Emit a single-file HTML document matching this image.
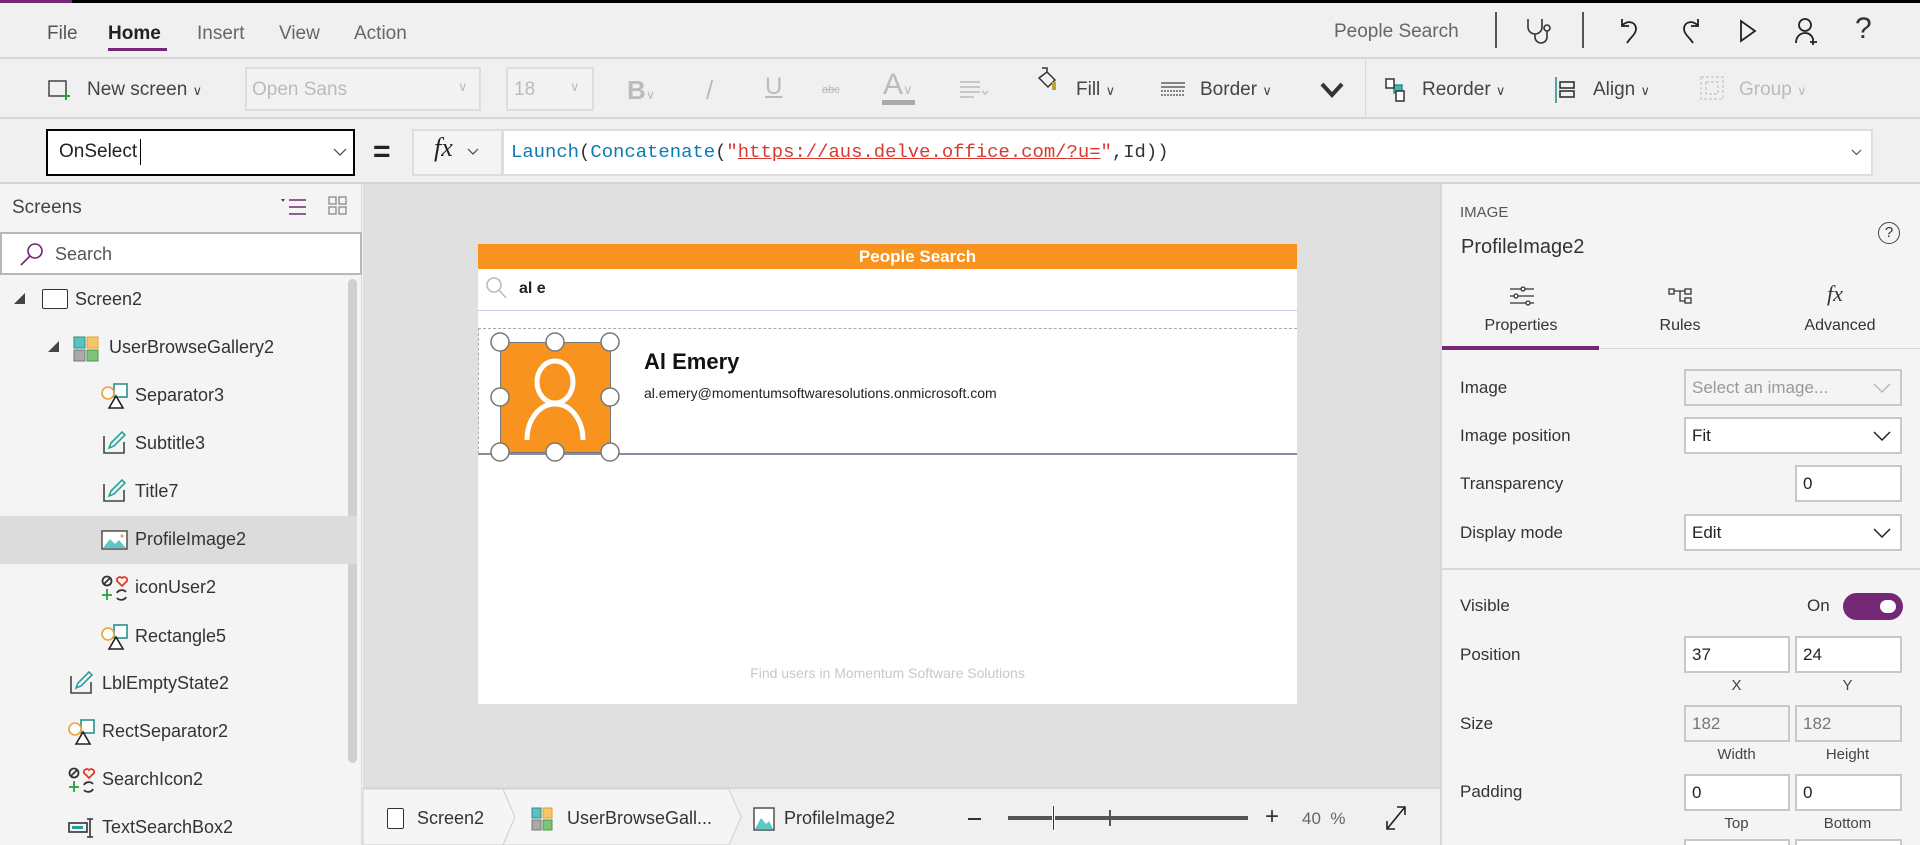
<!DOCTYPE html>
<html style="width:1920px;height:845px;overflow:hidden"><head><meta charset="utf-8"><style>
*{box-sizing:border-box;margin:0;padding:0}
body{width:1920px;height:845px;overflow:hidden;background:#f0f0f0;font-family:"Liberation Sans",sans-serif;color:#333;position:relative}
.a{position:absolute;white-space:nowrap}
.t{font-size:19px;color:#444}
.tb{font-size:19px;color:#444}
.dis{color:#bbb}
.tree{font-size:18px;color:#333}
.lbl{font-size:17px;color:#333;left:1460px}
.box{position:absolute;background:#fff;border:2px solid #c8c8c8;font-size:17px;padding-left:6px;line-height:33px;color:#222}
.sub{font-size:15px;color:#444;text-align:center;width:105px}
svg{position:absolute;overflow:visible}
</style></head><body>
<div class="a" style="left:0;top:0;width:1920px;height:3px;background:#000"></div>
<div class="a" style="left:0;top:0;width:72px;height:3px;background:#742774"></div>
<div class="a t" style="left:47px;top:23px;color:#555">File</div>
<div class="a t" style="left:108px;top:23px;color:#222;font-weight:bold">Home</div>
<div class="a" style="left:108px;top:48px;width:59px;height:3px;background:#742774"></div>
<div class="a t" style="left:197px;top:23px;color:#666">Insert</div>
<div class="a t" style="left:279px;top:23px;color:#666">View</div>
<div class="a t" style="left:354px;top:23px;color:#666">Action</div>
<div class="a t" style="left:1334px;top:21px;color:#666">People Search</div>
<div class="a" style="left:1495px;top:12px;width:2px;height:36px;background:#555"></div>
<div class="a" style="left:1582px;top:12px;width:2px;height:36px;background:#555"></div>
<svg style="left:1525px;top:17px" width="30" height="28" viewBox="0 0 30 28" fill="none" stroke="#333" stroke-width="1.6"><path d="M3 2v8a7 7 0 0 0 14 0V2M10 17v3a6 6 0 0 0 12 0v-6"/><circle cx="22" cy="11" r="3"/></svg>
<svg style="left:1618px;top:17px" width="22" height="28" viewBox="0 0 22 28" fill="none" stroke="#222" stroke-width="1.8"><path d="M4 2v7h7M4 9c4-6 14-5 14 3 0 5-6 9-9 14"/></svg>
<svg style="left:1680px;top:17px" width="22" height="28" viewBox="0 0 22 28" fill="none" stroke="#222" stroke-width="1.8"><path d="M18 2v7h-7M18 9c-4-6-14-5-14 3 0 5 6 9 9 14"/></svg>
<svg style="left:1739px;top:19px" width="18" height="24" viewBox="0 0 18 24" fill="none" stroke="#222" stroke-width="1.8"><path d="M2 2v20l14-10z"/></svg>
<svg style="left:1794px;top:17px" width="26" height="28" viewBox="0 0 26 28" fill="none" stroke="#222" stroke-width="1.8"><circle cx="11" cy="8" r="6"/><path d="M2 26c0-6 4-10 9-10s7 3 8 6M19 21v7M16 25h7"/></svg>
<div class="a" style="left:1855px;top:12px;font-size:30px;color:#333">?</div>
<div class="a" style="left:0;top:57px;width:1920px;height:2px;background:#d6d6d6"></div>
<svg style="left:48px;top:80px" width="22" height="20" viewBox="0 0 22 20" fill="none"><rect x="1" y="1" width="17" height="15" stroke="#444" stroke-width="1.5"/><path d="M18 12v8M14 16h8" stroke="#2e9b3a" stroke-width="2"/></svg>
<div class="a tb" style="left:87px;top:79px">New screen <span style="font-size:13px">&#8744;</span></div>
<div class="a" style="left:245px;top:67px;width:236px;height:44px;border:2px solid #ddd;background:#f2f2f2"></div>
<div class="a tb dis" style="left:252px;top:79px">Open Sans</div>
<div class="a dis" style="left:458px;top:79px;font-size:13px">&#8744;</div>
<div class="a" style="left:506px;top:67px;width:88px;height:44px;border:2px solid #ddd;background:#f2f2f2"></div>
<div class="a tb dis" style="left:514px;top:79px">18</div>
<div class="a dis" style="left:570px;top:79px;font-size:13px">&#8744;</div>
<div class="a dis" style="left:627px;top:75px;font-size:26px;font-weight:bold">B<span style="font-size:13px;font-weight:normal">&#8744;</span></div>
<div class="a dis" style="left:706px;top:75px;font-size:26px">/</div>
<div class="a dis" style="left:765px;top:73px;font-size:24px;text-decoration:underline">U</div>
<div class="a dis" style="left:822px;top:84px;font-size:11px;text-decoration:line-through">abc</div>
<div class="a dis" style="left:883px;top:68px;font-size:30px">A<span style="font-size:13px">&#8744;</span></div>
<div class="a" style="left:882px;top:100px;width:33px;height:5px;background:#aaa"></div>
<svg style="left:960px;top:81px" width="30" height="18" viewBox="0 0 30 18" stroke="#bbb" stroke-width="1.4"><path d="M0 1h20M0 6h20M0 11h20M0 16h14"/><path d="M22 10l3 3 3-3" fill="none"/></svg>
<svg style="left:1036px;top:66px" width="24" height="30" viewBox="0 0 24 30" fill="none" stroke="#333" stroke-width="1.5"><path d="M6 2h5v5M3 12l8-6 8 8-7 7z"/><path d="M18 16v8" stroke="#b8a23b" stroke-width="4"/></svg>
<div class="a tb" style="left:1076px;top:79px">Fill <span style="font-size:13px">&#8744;</span></div>
<svg style="left:1161px;top:82px" width="24" height="14" viewBox="0 0 24 14" stroke="#444" stroke-width="1.2"><path d="M0 1h24M0 5h24" /><path d="M0 9h24M0 13h24" stroke-dasharray="2 1"/></svg>
<div class="a tb" style="left:1200px;top:79px">Border <span style="font-size:13px">&#8744;</span></div>
<svg style="left:1320px;top:82px" width="24" height="16" viewBox="0 0 24 16" fill="none" stroke="#333" stroke-width="4"><path d="M2 2l10 11 10-11"/></svg>
<div class="a" style="left:1365px;top:59px;width:1px;height:59px;background:#d8d8d8"></div>
<svg style="left:1384px;top:77px" width="22" height="26" viewBox="0 0 22 26" fill="none" stroke-width="1.5"><rect x="10" y="8" width="8" height="8" fill="#43b6b0" stroke="#2a8f8a"/><rect x="2" y="2" width="8" height="9" stroke="#333" fill="#fff"/><rect x="12" y="14" width="8" height="10" stroke="#333" fill="#fff"/></svg>
<div class="a tb" style="left:1422px;top:79px">Reorder <span style="font-size:13px">&#8744;</span></div>
<svg style="left:1554px;top:77px" width="24" height="26" viewBox="0 0 24 26" fill="none" stroke-width="1.6"><path d="M2 0v26" stroke="#2a8f8a"/><rect x="6" y="5" width="14" height="6" stroke="#333"/><rect x="6" y="14" width="14" height="6" stroke="#333"/></svg>
<div class="a tb" style="left:1593px;top:79px">Align <span style="font-size:13px">&#8744;</span></div>
<svg style="left:1700px;top:76px" width="26" height="26" viewBox="0 0 26 26" fill="none" stroke="#ccc" stroke-width="1.4" stroke-dasharray="3 2"><rect x="1" y="1" width="22" height="22"/><rect x="6" y="6" width="12" height="12"/></svg>
<div class="a tb dis" style="left:1739px;top:79px">Group <span style="font-size:13px">&#8744;</span></div>
<div class="a" style="left:0;top:117px;width:1920px;height:2px;background:#d6d6d6"></div>
<div class="a" style="left:46px;top:129px;width:309px;height:47px;border:2px solid #000;background:#fff"></div>
<div class="a" style="left:59px;top:141px;font-size:19px;color:#222">OnSelect</div>
<div class="a" style="left:140px;top:139px;width:1px;height:26px;background:#000"></div>
<svg style="left:333px;top:148px" width="14" height="8" viewBox="0 0 14 8" fill="none" stroke="#444" stroke-width="1.2"><path d="M1 1l6 6 6-6"/></svg>
<div class="a" style="left:373px;top:135px;font-size:30px;font-weight:bold;color:#222">=</div>
<div class="a" style="left:412px;top:129px;width:91px;height:47px;border:2px solid #ddd;background:#f4f4f4"></div>
<div class="a" style="left:434px;top:133px;font-family:'Liberation Serif',serif;font-style:italic;font-size:26px;color:#222">fx</div>
<svg style="left:467px;top:148px" width="12" height="7" viewBox="0 0 12 7" fill="none" stroke="#444" stroke-width="1.2"><path d="M1 1l5 5 5-5"/></svg>
<div class="a" style="left:502px;top:129px;width:1371px;height:47px;border:2px solid #ddd;background:#fff"></div>
<div class="a" style="left:511px;top:141px;font-family:'Liberation Mono',monospace;font-size:18.9px;color:#333"><span style="color:#0b7ab5">Launch</span>(<span style="color:#0b7ab5">Concatenate</span>(<span style="color:#d9382e">"<u>https://aus.delve.office.com/?u=</u>"</span>,Id))</div>
<svg style="left:1851px;top:149px" width="11" height="6" viewBox="0 0 11 6" fill="none" stroke="#444" stroke-width="1"><path d="M1 1l4.5 4.5L10 1"/></svg>
<div class="a" style="left:0;top:182px;width:1920px;height:2px;background:#d6d6d6"></div>
<div class="a" style="left:0;top:184px;width:362px;height:661px;background:#f4f4f4;border-right:1px solid #ddd"></div>
<div class="a" style="left:12px;top:197px;font-size:19px;color:#444">Screens</div>
<svg style="left:281px;top:197px" width="26" height="20" viewBox="0 0 26 20" stroke="#742774" stroke-width="1.6"><path d="M8 3h17M8 10h17M8 17h17"/><path d="M0 2h4l-2 3z" fill="#742774" stroke="none"/></svg>
<svg style="left:328px;top:196px" width="20" height="20" viewBox="0 0 20 20" fill="none" stroke="#888" stroke-width="1.3"><rect x="1" y="1" width="7" height="7"/><rect x="11" y="1" width="7" height="7"/><rect x="1" y="11" width="7" height="7"/><rect x="11" y="11" width="7" height="7"/></svg>
<div class="a" style="left:0;top:232px;width:362px;height:43px;border:2px solid #b8b8b8;background:#fff"></div>
<svg style="left:19px;top:242px" width="26" height="26" viewBox="0 0 26 26" fill="none" stroke="#742774" stroke-width="1.6"><circle cx="16" cy="9" r="7"/><path d="M11 14L2 23"/></svg>
<div class="a" style="left:55px;top:244px;font-size:18px;color:#555">Search</div>
<div class="a" style="left:348px;top:279px;width:9px;height:484px;background:#d0d0d0;border-radius:5px"></div>
<div class="a" style="left:0;top:516px;width:357px;height:48px;background:#dcdcdc"></div>
<div class="a" style="left:14px;top:293px;width:0;height:0;border-left:11px solid transparent;border-bottom:11px solid #444"></div>
<div class="a" style="left:42px;top:289px;width:26px;height:20px;border:1.5px solid #333;border-radius:2px;background:#fff"></div>
<div class="a tree" style="left:75px;top:289px">Screen2</div>
<div class="a" style="left:48px;top:341px;width:0;height:0;border-left:11px solid transparent;border-bottom:11px solid #444"></div>
<svg style="left:73px;top:336px" width="26" height="26" viewBox="0 0 26 26"><rect x="1" y="1" width="11" height="11" fill="#5bc2c2" stroke="#2a8f8a"/><rect x="14" y="1" width="11" height="11" fill="#f7c56a" stroke="#e0a030"/><rect x="1" y="14" width="11" height="11" fill="#aaa" stroke="#777"/><rect x="14" y="14" width="11" height="11" fill="#7cc47c" stroke="#4a9a4a"/></svg>
<div class="a tree" style="left:109px;top:337px">UserBrowseGallery2</div>
<svg style="left:101px;top:383px" width="27" height="26" viewBox="0 0 27 26" fill="none" stroke-width="1.6"><rect x="13" y="1" width="13" height="13" stroke="#2a8f8a" fill="#fff"/><circle cx="7" cy="10" r="6" stroke="#e8a33a" fill="#fff"/><path d="M8 25l7-12 7 12z" stroke="#222" fill="#fff"/></svg>
<div class="a tree" style="left:135px;top:385px">Separator3</div>
<svg style="left:103px;top:430px" width="24" height="24" viewBox="0 0 24 24" fill="none" stroke-width="1.6"><path d="M1 6v17h20V12" stroke="#444"/><path d="M6 18l2-5L19 2l3 3-11 11z" stroke="#2a9f9a"/></svg>
<div class="a tree" style="left:135px;top:433px">Subtitle3</div>
<svg style="left:103px;top:478px" width="24" height="24" viewBox="0 0 24 24" fill="none" stroke-width="1.6"><path d="M1 6v17h20V12" stroke="#444"/><path d="M6 18l2-5L19 2l3 3-11 11z" stroke="#2a9f9a"/></svg>
<div class="a tree" style="left:135px;top:481px">Title7</div>
<svg style="left:101px;top:530px" width="27" height="20" viewBox="0 0 27 20" stroke-width="1.4"><rect x="1" y="1" width="25" height="18" fill="#fff" stroke="#444"/><path d="M2 18l7-9 5 5 4-4 7 8z" fill="#5bc8c4"/><circle cx="21" cy="6" r="1.5" fill="#f0a030"/></svg>
<div class="a tree" style="left:135px;top:529px">ProfileImage2</div>
<svg style="left:101px;top:575px" width="27" height="26" viewBox="0 0 27 26" fill="none" stroke-width="1.8"><circle cx="6" cy="6" r="4.5" stroke="#333"/><path d="M3 9l6-6" stroke="#333"/><path d="M21 11l-5-5a3 3 0 0 1 5-3 3 3 0 0 1 5 3z" stroke="#e53a2a"/><path d="M6 14v11M1 20h10" stroke="#2e9b3a"/><path d="M16 18a5 4 0 0 1 9-1M25 22a5 4 0 0 1-9 1" stroke="#333"/></svg>
<div class="a tree" style="left:135px;top:577px">iconUser2</div>
<svg style="left:101px;top:624px" width="27" height="26" viewBox="0 0 27 26" fill="none" stroke-width="1.6"><rect x="13" y="1" width="13" height="13" stroke="#2a8f8a" fill="#fff"/><circle cx="7" cy="10" r="6" stroke="#e8a33a" fill="#fff"/><path d="M8 25l7-12 7 12z" stroke="#222" fill="#fff"/></svg>
<div class="a tree" style="left:135px;top:626px">Rectangle5</div>
<svg style="left:70px;top:670px" width="24" height="24" viewBox="0 0 24 24" fill="none" stroke-width="1.6"><path d="M1 6v17h20V12" stroke="#444"/><path d="M6 18l2-5L19 2l3 3-11 11z" stroke="#2a9f9a"/></svg>
<div class="a tree" style="left:102px;top:673px">LblEmptyState2</div>
<svg style="left:68px;top:719px" width="27" height="26" viewBox="0 0 27 26" fill="none" stroke-width="1.6"><rect x="13" y="1" width="13" height="13" stroke="#2a8f8a" fill="#fff"/><circle cx="7" cy="10" r="6" stroke="#e8a33a" fill="#fff"/><path d="M8 25l7-12 7 12z" stroke="#222" fill="#fff"/></svg>
<div class="a tree" style="left:102px;top:721px">RectSeparator2</div>
<svg style="left:68px;top:767px" width="27" height="26" viewBox="0 0 27 26" fill="none" stroke-width="1.8"><circle cx="6" cy="6" r="4.5" stroke="#333"/><path d="M3 9l6-6" stroke="#333"/><path d="M21 11l-5-5a3 3 0 0 1 5-3 3 3 0 0 1 5 3z" stroke="#e53a2a"/><path d="M6 14v11M1 20h10" stroke="#2e9b3a"/><path d="M16 18a5 4 0 0 1 9-1M25 22a5 4 0 0 1-9 1" stroke="#333"/></svg>
<div class="a tree" style="left:102px;top:769px">SearchIcon2</div>
<svg style="left:68px;top:817px" width="27" height="22" viewBox="0 0 27 22" fill="none" stroke-width="1.6"><rect x="1" y="6" width="18" height="9" stroke="#333"/><rect x="4" y="9" width="11" height="3" fill="#2a9f9a" stroke="none"/><path d="M22 2v18M19 2h6M19 20h6" stroke="#333"/></svg>
<div class="a tree" style="left:102px;top:817px">TextSearchBox2</div>
<div class="a" style="left:363px;top:184px;width:1078px;height:603px;background:#e0e0e0"></div>
<div class="a" style="left:478px;top:244px;width:819px;height:460px;background:#fff"></div>
<div class="a" style="left:478px;top:244px;width:819px;height:25px;background:#f7931e;color:#fff;font-weight:bold;font-size:17px;text-align:center;line-height:25px;padding-left:60px">People Search</div>
<svg style="left:485px;top:276px" width="22" height="24" viewBox="0 0 22 24" fill="none" stroke="#bbb" stroke-width="1.6"><circle cx="9" cy="9" r="7"/><path d="M14 14l7 8"/></svg>
<div class="a" style="left:519px;top:280px;font-size:16px;color:#222;font-weight:bold">al e</div>
<div class="a" style="left:478px;top:310px;width:819px;height:1px;background:#c8d0e0"></div>
<div class="a" style="left:478px;top:328px;width:819px;height:0;border-top:1px dashed #aaa"></div>
<div class="a" style="left:478px;top:453px;width:819px;height:2px;background:#8a8aa0"></div>
<div class="a" style="left:478px;top:328px;width:0;height:126px;border-left:1px dashed #aaa"></div>
<div class="a" style="left:500px;top:342px;width:111px;height:111px;background:#f7931e;border:1px solid #777"></div>
<svg style="left:500px;top:342px" width="111" height="111" viewBox="0 0 111 111" fill="none" stroke="#fff" stroke-width="5"><ellipse cx="55" cy="40" rx="18" ry="21"/><path d="M27 98c0-20 12-36 28-36s28 16 28 36"/></svg>
<svg style="left:488px;top:330px" width="135" height="135" viewBox="0 0 135 135" fill="#fff" stroke="#777" stroke-width="1.5"><circle cx="12" cy="12" r="9"/><circle cx="67" cy="12" r="9"/><circle cx="122" cy="12" r="9"/><circle cx="12" cy="67" r="9"/><circle cx="122" cy="67" r="9"/><circle cx="12" cy="122" r="9"/><circle cx="67" cy="122" r="9"/><circle cx="122" cy="122" r="9"/></svg>
<div class="a" style="left:644px;top:349px;font-size:22px;font-weight:bold;color:#111">Al Emery</div>
<div class="a" style="left:644px;top:385px;font-size:14px;color:#222">al.emery@momentumsoftwaresolutions.onmicrosoft.com</div>
<div class="a" style="left:478px;top:665px;width:819px;text-align:center;font-size:14px;color:#c8c8c8">Find users in Momentum Software Solutions</div>
<div class="a" style="left:363px;top:787px;width:1078px;height:58px;background:#f0f0f0;border-top:2px solid #d8d8d8"></div>
<svg style="left:363px;top:789px" width="400" height="56" viewBox="0 0 400 56" fill="#f5f5f5" stroke="#d0d0d0"><path d="M0 0h140l12 28-12 28H0z"/><path d="M140 0h226l12 28-12 28H140l12-28z"/></svg>
<div class="a" style="left:387px;top:808px;width:17px;height:21px;border:1.5px solid #333;border-radius:2px;background:#fff"></div>
<div class="a" style="left:417px;top:808px;font-size:18px;color:#333">Screen2</div>
<svg style="left:531px;top:807px" width="22" height="24" viewBox="0 0 22 24"><rect x="1" y="1" width="9" height="10" fill="#5bc2c2" stroke="#2a8f8a"/><rect x="12" y="1" width="9" height="10" fill="#f7c56a" stroke="#e0a030"/><rect x="1" y="13" width="9" height="10" fill="#aaa" stroke="#777"/><rect x="12" y="13" width="9" height="10" fill="#7cc47c" stroke="#4a9a4a"/></svg>
<div class="a" style="left:567px;top:808px;font-size:18px;color:#333">UserBrowseGall...</div>
<svg style="left:753px;top:807px" width="22" height="24" viewBox="0 0 22 24" stroke-width="1.4"><rect x="1" y="1" width="20" height="22" fill="#fff" stroke="#444"/><path d="M2 22l6-11 5 6 3-3 4 8z" fill="#5bc8c4"/></svg>
<div class="a" style="left:784px;top:808px;font-size:18px;color:#333">ProfileImage2</div>
<div class="a" style="left:968px;top:818px;width:13px;height:1.5px;background:#333"></div>
<div class="a" style="left:1008px;top:816px;width:240px;height:4px;background:#555"></div>
<div class="a" style="left:1052px;top:805px;width:3px;height:26px;background:#333;border:1px solid #fff"></div>
<div class="a" style="left:1109px;top:810px;width:2px;height:16px;background:#555"></div>
<div class="a" style="left:1265px;top:803px;font-size:24px;color:#333">+</div>
<div class="a" style="left:1302px;top:809px;font-size:17px;color:#666">40 &nbsp;%</div>
<svg style="left:1384px;top:804px" width="24" height="28" viewBox="0 0 24 28" fill="none" stroke="#222" stroke-width="1.6"><path d="M3 25L21 3M13 3h8v8M3 17v8h8"/></svg>
<div class="a" style="left:1440px;top:184px;width:480px;height:661px;background:#f4f4f4;border-left:2px solid #d8d8d8"></div>
<div class="a" style="left:1460px;top:204px;font-size:15px;color:#555">IMAGE</div>
<div class="a" style="left:1461px;top:236px;font-size:20px;color:#333">ProfileImage2</div>
<div class="a" style="left:1878px;top:222px;width:22px;height:22px;border:1.5px solid #444;border-radius:50%;font-size:15px;text-align:center;line-height:19px;color:#333">?</div>
<svg style="left:1510px;top:287px" width="24" height="18" viewBox="0 0 24 18" fill="none" stroke="#333" stroke-width="1.3"><path d="M0 2h24M0 9h24M0 16h24"/><circle cx="13" cy="2" r="2" fill="#f4f4f4"/><circle cx="6" cy="9" r="2" fill="#f4f4f4"/><circle cx="18" cy="16" r="2" fill="#f4f4f4"/></svg>
<div class="a" style="left:1441px;top:317px;width:160px;text-align:center;font-size:16px;color:#333">Properties</div>
<svg style="left:1668px;top:288px" width="24" height="16" viewBox="0 0 24 16" fill="none" stroke="#333" stroke-width="1.3"><rect x="1" y="1" width="5" height="5"/><rect x="17" y="1" width="6" height="5"/><rect x="17" y="10" width="6" height="5"/><path d="M6 3h11M12 3v10h5"/></svg>
<div class="a" style="left:1600px;top:317px;width:160px;text-align:center;font-size:16px;color:#333">Rules</div>
<div class="a" style="left:1827px;top:281px;font-family:'Liberation Serif',serif;font-style:italic;font-size:22px;color:#333">fx</div>
<div class="a" style="left:1760px;top:317px;width:160px;text-align:center;font-size:16px;color:#333">Advanced</div>
<div class="a" style="left:1442px;top:348px;width:478px;height:1px;background:#d8d8d8"></div>
<div class="a" style="left:1442px;top:346px;width:157px;height:4px;background:#742774"></div>
<div class="a lbl" style="top:378px">Image</div>
<div class="box" style="left:1684px;top:369px;width:218px;height:37px;background:#f4f4f4;color:#999">Select an image...</div>
<svg style="left:1873px;top:383px" width="18" height="10" viewBox="0 0 18 10" fill="none" stroke="#bbb" stroke-width="1.5"><path d="M1 1l8 8 8-8"/></svg>
<div class="a lbl" style="top:426px">Image position</div>
<div class="box" style="left:1684px;top:417px;width:218px;height:37px">Fit</div>
<svg style="left:1873px;top:431px" width="18" height="10" viewBox="0 0 18 10" fill="none" stroke="#222" stroke-width="1.5"><path d="M1 1l8 8 8-8"/></svg>
<div class="a lbl" style="top:474px">Transparency</div>
<div class="box" style="left:1795px;top:465px;width:107px;height:37px">0</div>
<div class="a lbl" style="top:523px">Display mode</div>
<div class="box" style="left:1684px;top:514px;width:218px;height:37px">Edit</div>
<svg style="left:1873px;top:528px" width="18" height="10" viewBox="0 0 18 10" fill="none" stroke="#222" stroke-width="1.5"><path d="M1 1l8 8 8-8"/></svg>
<div class="a" style="left:1442px;top:568px;width:478px;height:2px;background:#d8d8d8"></div>
<div class="a lbl" style="top:596px">Visible</div>
<div class="a" style="left:1807px;top:596px;font-size:17px;color:#333">On</div>
<div class="a" style="left:1843px;top:593px;width:60px;height:27px;border-radius:14px;background:#742774"></div>
<div class="a" style="left:1880px;top:600px;width:16px;height:13px;border-radius:7px;background:#fff"></div>
<div class="a lbl" style="top:645px">Position</div>
<div class="box" style="left:1684px;top:636px;width:106px;height:37px">37</div>
<div class="box" style="left:1795px;top:636px;width:107px;height:37px">24</div>
<div class="a sub" style="left:1684px;top:677px">X</div>
<div class="a sub" style="left:1795px;top:677px">Y</div>
<div class="a lbl" style="top:714px">Size</div>
<div class="box" style="left:1684px;top:705px;width:106px;height:37px;background:#f4f4f4;color:#777">182</div>
<div class="box" style="left:1795px;top:705px;width:107px;height:37px;background:#f4f4f4;color:#777">182</div>
<div class="a sub" style="left:1684px;top:746px">Width</div>
<div class="a sub" style="left:1795px;top:746px">Height</div>
<div class="a lbl" style="top:782px">Padding</div>
<div class="box" style="left:1684px;top:774px;width:106px;height:37px">0</div>
<div class="box" style="left:1795px;top:774px;width:107px;height:37px">0</div>
<div class="a sub" style="left:1684px;top:815px">Top</div>
<div class="a sub" style="left:1795px;top:815px">Bottom</div>
<div class="a" style="left:1684px;top:839px;width:106px;height:6px;background:#fff;border:2px solid #c8c8c8;border-bottom:none"></div>
<div class="a" style="left:1795px;top:839px;width:107px;height:6px;background:#fff;border:2px solid #c8c8c8;border-bottom:none"></div>
</body></html>
